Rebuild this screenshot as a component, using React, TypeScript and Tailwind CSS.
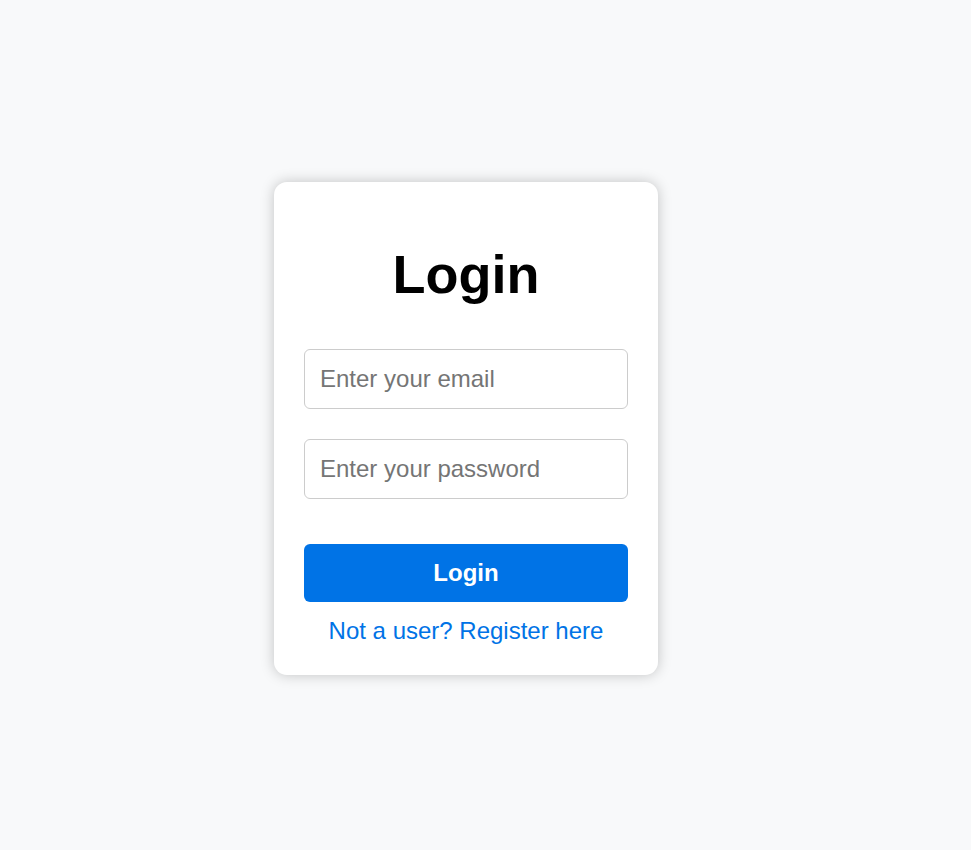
import React from "react";

export default function App() {
  return (
    <div
      className="min-h-screen w-full bg-[#f8f9fa] flex items-center justify-center pr-[39px] pt-[6px]"
      style={{ fontFamily: '"Liberation Sans", Arial, sans-serif' }}
    >
      <div className="w-[384px] bg-white rounded-[13px] shadow-[0_0_14px_rgba(0,0,0,0.22)] px-[30px] pt-[30px] pb-[30px] flex flex-col">
        <h1 className="text-[54px] leading-[62px] font-bold text-black text-center mt-[31px] mb-[44px]">
          Login
        </h1>
        <form className="flex flex-col" onSubmit={(e) => e.preventDefault()}>
          <input
            type="email"
            placeholder="Enter your email"
            className="w-full h-[60px] border border-[#cccccc] rounded-[6px] px-[15px] text-[24px] text-black placeholder:text-[#757575] outline-none bg-white"
          />
          <input
            type="password"
            placeholder="Enter your password"
            className="w-full h-[60px] mt-[30px] border border-[#cccccc] rounded-[6px] px-[15px] text-[24px] text-black placeholder:text-[#757575] outline-none bg-white"
          />
          <button
            type="submit"
            className="w-full h-[58px] mt-[45px] bg-[#0073e6] text-white text-[24px] font-bold rounded-[6px]"
          >
            Login
          </button>
        </form>
        <p className="text-center mt-[15px] text-[24px] leading-[28px]">
          <a href="#" className="text-[#0073e6]">
            Not a user? Register here
          </a>
        </p>
      </div>
    </div>
  );
}
